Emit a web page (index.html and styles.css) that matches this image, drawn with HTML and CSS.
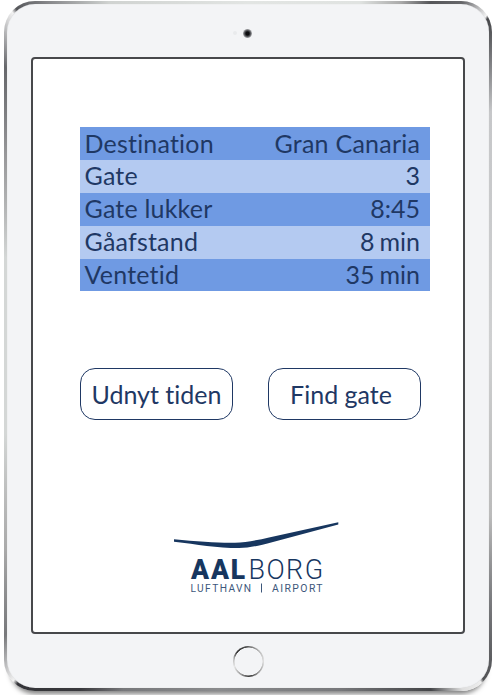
FILE: index.html
```html
<!DOCTYPE html>
<html lang="da">
<head>
<meta charset="utf-8">
<title>Aalborg Lufthavn</title>
<link rel="stylesheet" href="styles.css">
</head>
<body>
<div class="tablet">
  <div class="face">
    <div class="top-bezel"><span class="sensor"></span><span class="camera"></span></div>
    <main class="screen">
      <dl class="info">
        <div class="row"><dt>Destination</dt><dd class="place">Gran Canaria</dd></div>
        <div class="row"><dt>Gate</dt><dd>3</dd></div>
        <div class="row"><dt>Gate lukker</dt><dd>8:45</dd></div>
        <div class="row"><dt>Gåafstand</dt><dd class="minutes">8 min</dd></div>
        <div class="row"><dt>Ventetid</dt><dd class="minutes">35 min</dd></div>
      </dl>
      <div class="actions">
        <button class="btn">Udnyt tiden</button>
        <button class="btn btn-gate">Find gate</button>
      </div>
      <svg class="logo" width="170" height="76" viewBox="0 0 170 76">
        <path class="wing" d="M1 19.200 C25 21.700 48 23.100 62 22.700 C73 22.500 85 20 96 17.500 L165.300 2.200 V4.500 L100 22 C84 26.100 76 28 66 28.100 C44 28.100 24 24.500 1 21.800 Z"/>
        <text class="name-bold" x="18" y="58.500" textLength="56" lengthAdjust="spacingAndGlyphs">AAL</text>
        <text class="name-light" x="75.500" y="58.500" textLength="76" lengthAdjust="spacingAndGlyphs">BORG</text>
        <text class="sub" x="17.500" y="71.500" textLength="62" lengthAdjust="spacingAndGlyphs">LUFTHAVN</text>
        <path class="divider" d="M88.500 63.500 V72.500"/>
        <text class="sub" x="99" y="71.500" textLength="52" lengthAdjust="spacingAndGlyphs">AIRPORT</text>
      </svg>
    </main>
    <div class="home"></div>
  </div>
</div>
</body>
</html>
```
FILE: styles.css
```css
* { box-sizing: border-box; }

body {
  margin: 0;
  height: 695px;
  overflow: hidden;
  background: #fff;
  font-family: Lato, sans-serif;
  font-variant-ligatures: none;
  color: #1f3864;
}

.tablet {
  width: 488px;
  height: 690px;
  margin: 1px 0 0 4px;
  padding: 3px;
  border-radius: 31px;
  background: conic-gradient(
    #e2e5e3 0deg, #e0e3e1 18deg, #aaa 24deg, #555659 28deg, #66676a 32deg, #f2f2f2 35.8deg,
    #444548 36.2deg, #77787b 40deg, #c6c7c9 46deg, #cfd0d1 90deg, #bbb 125deg, #77787b 137deg,
    #505154 144.800deg, #eee 145.300deg, #dedede 148deg, #444548 152deg, #77787b 165deg,
    #8a8b8d 185deg, #77787b 200deg, #39393d 206deg, #333438 214.300deg, #f2f2f2 215deg,
    #77787b 220deg, #aaa 230deg, #d4d7d6 250deg, #d4d7d6 290deg, #99999b 308deg, #66676b 319deg,
    #f2f2f2 324.800deg, #55565a 325.500deg, #88898c 330deg, #d0d3d1 338deg, #e2e5e3 360deg);
  box-shadow: 0 9px 5px -6px rgba(0, 0, 0, .5);
}

.face {
  width: 100%;
  height: 100%;
  border-radius: 28px;
  background: #f3f4f6;
  box-shadow: inset 0 0 1px #c5c6c8;
  display: flex;
  flex-direction: column;
  align-items: center;
}

.top-bezel {
  width: 100%;
  height: 53px;
  padding: 25px 0 0 226px;
  display: flex;
  align-items: flex-start;
  gap: 8px;
}

.sensor {
  width: 4px;
  height: 4px;
  margin-top: 2px;
  border-radius: 50%;
  background: #e9eaec;
}

.camera {
  width: 9px;
  height: 9px;
  margin-left: -2px;
  border-radius: 50%;
  background: radial-gradient(circle, #0c0c0f 0 25%, #4b4c50 45%, #a8a9ac 70%);
}

.screen {
  flex: none;
  width: 434px;
  height: 577px;
  border: 2px solid #47484b;
  border-radius: 4px;
  background: #fff;
  padding: 68px 0 0 47px;
}

.info {
  width: 349.500px;
  height: 165px;
  margin: 0;
  font-size: 25px;
  line-height: 31px;
}

.row {
  display: flex;
  justify-content: space-between;
  height: 32.900px;
  padding: 0 9.500px 0 4.500px;
  background: #b4caf1;
}

.row:nth-child(odd) { background: #6f9ae3; }

.row:first-child { line-height: 32px; }

dt { letter-spacing: .2px; }

dd { margin: 0; }

.place { letter-spacing: .25px; margin-right: -.25px; }

.minutes { word-spacing: -1.500px; }

.actions {
  display: flex;
  gap: 34.500px;
  margin-top: 76px;
}

.btn {
  width: 153px;
  height: 52px;
  padding: 0 0 1px;
  border: 1.500px solid #1f3864;
  border-radius: 15px;
  background: #fff;
  color: #1f3864;
  font: 25px Lato, sans-serif;
  font-variant-ligatures: none;
  white-space: nowrap;
}

.btn-gate { padding: 0 6px 0 0; }

.logo {
  display: block;
  margin: 100px 0 0 93px;
}

.wing { fill: #17365f; }

.name-bold { font: 900 28px Roboto, sans-serif; letter-spacing: 2px; fill: #17365f; }

.name-light { font: 300 28px Roboto, sans-serif; letter-spacing: 1.500px; fill: #17365f; }

.sub { font: 400 11px Roboto, sans-serif; letter-spacing: 1.500px; fill: #3d577b; }

.divider { stroke: #3d577b; stroke-width: 1; }

.home {
  width: 31px;
  height: 31px;
  margin: 12px 0 0 0;
  border-radius: 50%;
  background:
    radial-gradient(circle closest-side, #f3f4f6 88%, transparent 92%),
    conic-gradient(#666, #bbb 45deg, #ddd 90deg, #999 140deg, #333 175deg, #999 210deg, #e5e5e5 250deg, #bbb 280deg, #333 310deg, #555 360deg);
}
```
